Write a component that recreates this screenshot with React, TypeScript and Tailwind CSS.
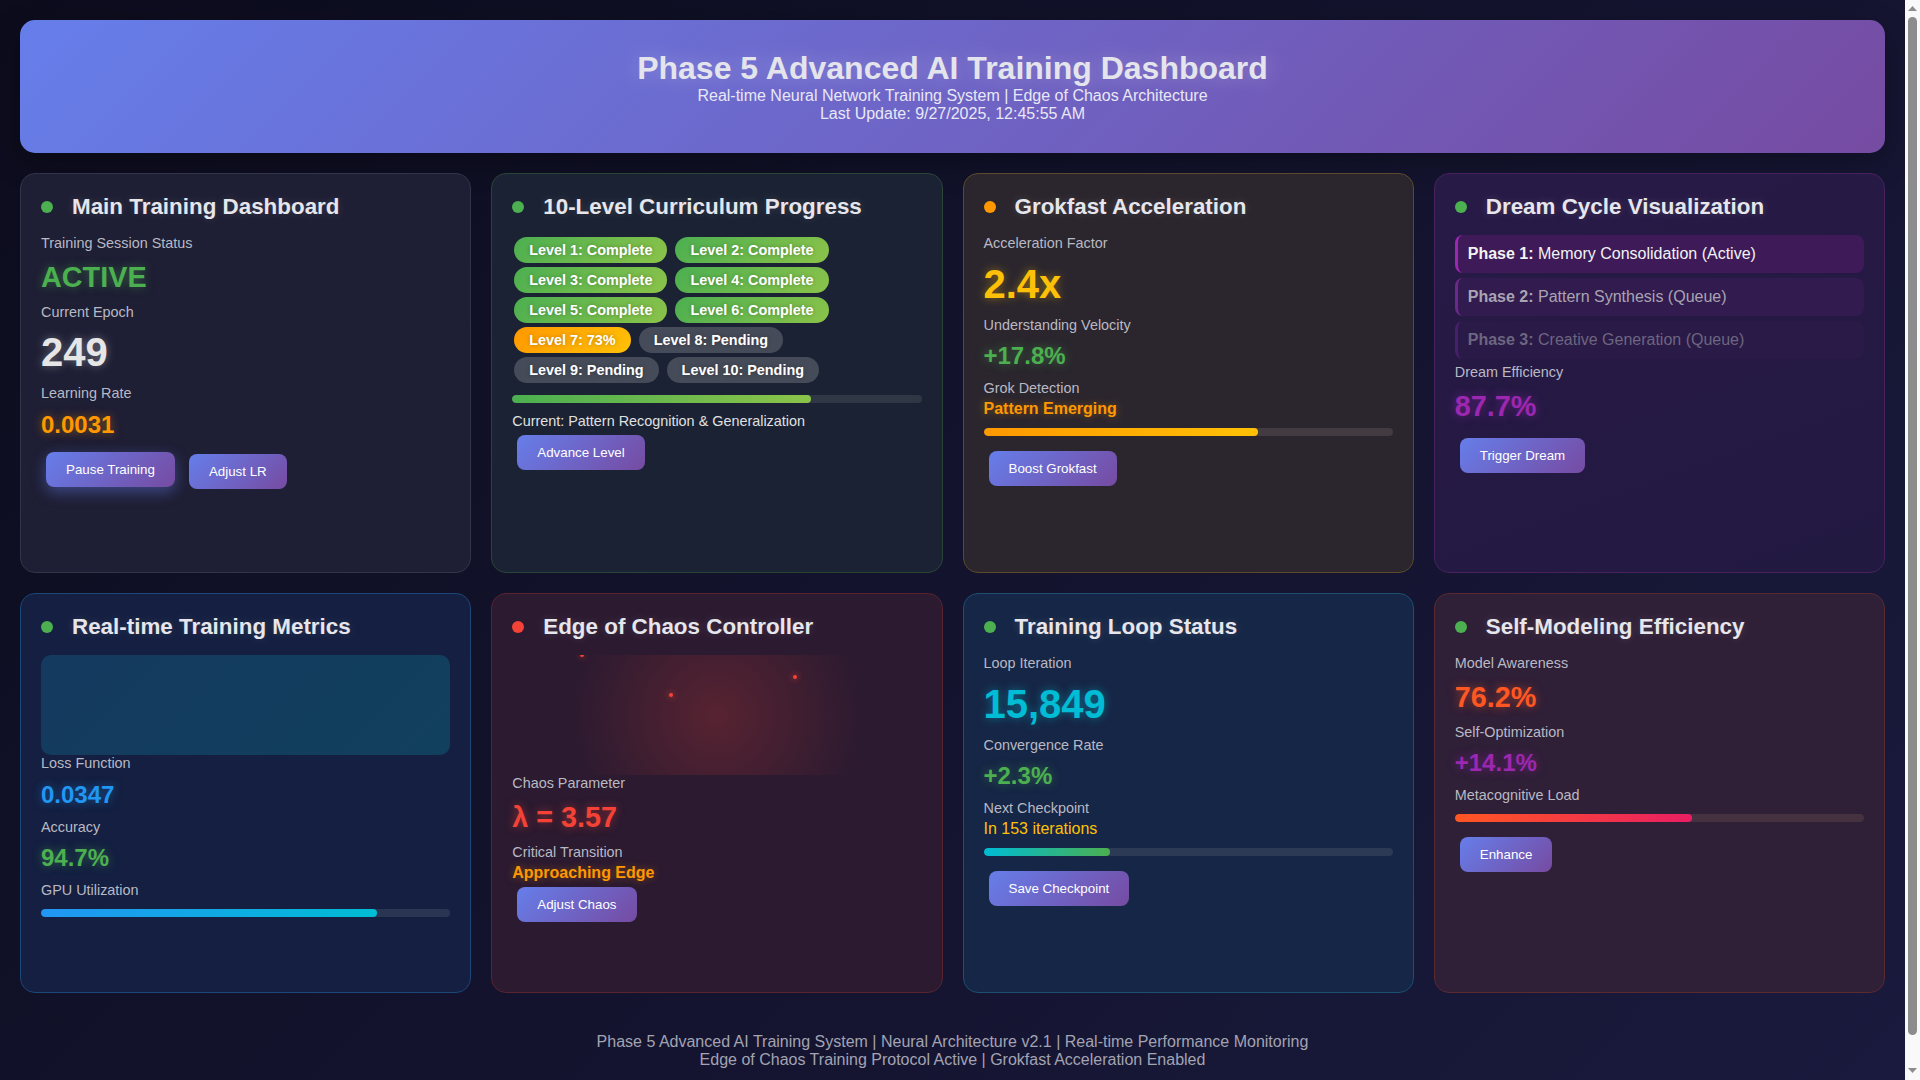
import React from "react";

type CardProps = {
  title: string;
  dot: string;
  className: string;
  children: React.ReactNode;
};

const Card = ({ title, dot, className, children }: CardProps) => {
  return (
    <div className={`min-h-[400px] rounded-[15px] border p-5 ${className}`}>
      <div className="mb-[15px] flex items-center gap-[19px]">
        <span className={`h-3 w-3 shrink-0 rounded-full ${dot}`} />
        <h2 className="text-[22.4px] font-bold leading-[26px] text-[#e6e6ec] [text-shadow:0_0_8px_rgba(255,255,255,0.15)]">
          {title}
        </h2>
      </div>
      {children}
    </div>
  );
};

const Label = ({ children }: { children: React.ReactNode }) => (
  <div className="text-[14.4px] leading-[16.5px] text-[#b9b9c4]">{children}</div>
);

const Btn = ({ children, hot }: { children: React.ReactNode; hot?: boolean }) => (
  <button
    className={`m-[5px] rounded-[8px] bg-[linear-gradient(135deg,#667eea_0%,#764ba2_100%)] px-5 py-[10px] text-[13.333px] leading-[15px] text-white ${
      hot ? "-translate-y-[2px] shadow-[0_5px_15px_rgba(102,126,234,0.45)]" : ""
    }`}
  >
    {children}
  </button>
);

const Bar = ({ pct, fill, track }: { pct: number; fill: string; track: string }) => (
  <div className={`my-[10px] h-2 w-full overflow-hidden rounded-full ${track}`}>
    <div className={`h-full rounded-full ${fill}`} style={{ width: `${pct}%` }} />
  </div>
);

const complete = "bg-[linear-gradient(135deg,#4caf50_0%,#8bc34a_100%)]";

const levels = [
  { t: "Level 1: Complete", c: complete },
  { t: "Level 2: Complete", c: complete },
  { t: "Level 3: Complete", c: complete },
  { t: "Level 4: Complete", c: complete },
  { t: "Level 5: Complete", c: complete },
  { t: "Level 6: Complete", c: complete },
  { t: "Level 7: 73%", c: "bg-[linear-gradient(135deg,#ff9800_0%,#ffc107_100%)]" },
  { t: "Level 8: Pending", c: "bg-[#454b58]" },
  { t: "Level 9: Pending", c: "bg-[#454b58]" },
  { t: "Level 10: Pending", c: "bg-[#454b58]" },
];

// the window's scrollbar, as it shows in the screenshot
const Scrollbar = () => (
  <aside className="sticky top-0 flex h-screen w-[15px] shrink-0 flex-col items-center bg-[#f9f9f9] pt-[6px] pb-[7px]">
    <svg width="9" height="5" viewBox="0 0 9 5">
      <polygon points="4.5,0 9,5 0,5" fill="#8c8c8c" />
    </svg>
    <div className="mt-[6px] h-[1018px] w-[9px] rounded-full bg-[#8c8c8c]" />
    <div className="flex-1" />
    <svg width="9" height="5" viewBox="0 0 9 5">
      <polygon points="0,0 9,0 4.5,5" fill="#8c8c8c" />
    </svg>
  </aside>
);

export default function App() {
  return (
    <div className="flex items-start font-['Liberation_Sans',Arial,sans-serif] leading-[1.15] text-[#e0e0e0]">
      <div className="min-h-screen w-[1905px] shrink-0 bg-[linear-gradient(135deg,#0c0c1d_0%,#1a1a3e_100%)] p-5">
        <header className="rounded-[15px] bg-[linear-gradient(135deg,#667eea_0%,#764ba2_100%)] p-[30px] text-center shadow-[0_10px_30px_rgba(0,0,0,0.3)]">
          <h1 className="text-[32px] font-bold leading-[37px] text-[#e4e4ec] [text-shadow:0_0_20px_rgba(255,255,255,0.25)]">
            Phase 5 Advanced AI Training Dashboard
          </h1>
          <div className="text-[16px] leading-[18px] text-[#e8e8f4]">
            Real-time Neural Network Training System | Edge of Chaos Architecture
          </div>
          <div className="text-[16px] leading-[18px] text-[#e8e8f4]">
            Last Update: 9/27/2025, 12:45:55 AM
          </div>
        </header>

        <main className="mt-5 grid grid-cols-4 gap-5">
          <Card title="Main Training Dashboard" dot="bg-[#4caf50]" className="border-[#33334a] bg-[#1e1e34]">
            <Label>Training Session Status</Label>
            <div className="mt-[9px] mb-[10px] text-[28.8px] font-bold leading-[33px] text-[#4caf50] [text-shadow:0_0_10px_rgba(76,175,80,0.5)]">
              ACTIVE
            </div>
            <Label>Current Epoch</Label>
            <div className="mt-[9px] mb-[10px] text-[40px] font-bold leading-[46px] text-[#e6e6e6] [text-shadow:0_0_10px_rgba(255,255,255,0.35)]">
              249
            </div>
            <Label>Learning Rate</Label>
            <div className="mt-[9px] mb-[10px] text-[24px] font-bold leading-[28px] text-[#ff9800] [text-shadow:0_0_10px_rgba(255,152,0,0.5)]">
              0.0031
            </div>
            <div className="flex items-start gap-[4px]">
              <Btn hot>Pause Training</Btn>
              <Btn>Adjust LR</Btn>
            </div>
          </Card>

          <Card title="10-Level Curriculum Progress" dot="bg-[#4caf50]" className="border-[#2a4536] bg-[#1a2233]">
            <div className="flex flex-wrap gap-x-[8px] gap-y-[4px] p-[2px]">
              {levels.map((l) => (
                <span
                  key={l.t}
                  className={`rounded-full px-[15px] py-[5px] text-[14.4px] font-bold leading-[16px] text-white [text-shadow:0_0_4px_rgba(0,0,0,0.3)] ${l.c}`}
                >
                  {l.t}
                </span>
              ))}
            </div>
            <Bar pct={73} fill="bg-[linear-gradient(90deg,#4caf50_0%,#8bc34a_100%)]" track="bg-[#2f3744]" />
            <div className="text-[14.4px] leading-[16.5px] text-[#e0e0e0]">
              Current: Pattern Recognition &amp; Generalization
            </div>
            <Btn>Advance Level</Btn>
          </Card>

          <Card title="Grokfast Acceleration" dot="bg-[#ff9800]" className="border-[#5c4a2b] bg-[#2b262e]">
            <Label>Acceleration Factor</Label>
            <div className="mt-[9px] mb-[10px] text-[40px] font-bold leading-[46px] text-[#ffc107] [text-shadow:0_0_10px_rgba(255,193,7,0.45)]">
              2.4x
            </div>
            <Label>Understanding Velocity</Label>
            <div className="mt-[9px] mb-[10px] text-[24px] font-bold leading-[28px] text-[#4caf50] [text-shadow:0_0_10px_rgba(76,175,80,0.5)]">
              +17.8%
            </div>
            <Label>Grok Detection</Label>
            <div className="mt-[3.5px] text-[16px] font-bold leading-[18.4px] text-[#ff9800] [text-shadow:0_0_8px_rgba(255,152,0,0.4)]">
              Pattern Emerging
            </div>
            <Bar pct={67} fill="bg-[linear-gradient(90deg,#ff9800_0%,#ffc107_100%)]" track="bg-[#433b42]" />
            <Btn>Boost Grokfast</Btn>
          </Card>

          <Card title="Dream Cycle Visualization" dot="bg-[#4caf50]" className="border-[#48215f] bg-[linear-gradient(160deg,#281a47_0%,#221941_100%)]">
            <div className="mb-[5px] rounded-[8px] border-l-[3px] border-[#9c27b0] bg-[#3e1a59] px-[10px] py-[10px] text-[16px] leading-[18px] text-[#f2f2f2]">
              <b>Phase 1:</b> Memory Consolidation (Active)
            </div>
            <div className="mb-[5px] rounded-[8px] border-l-[3px] border-[#6b2a8a] bg-[#311b4f] px-[10px] py-[10px] text-[16px] leading-[18px] text-[#a9a4b2]">
              <b>Phase 2:</b> Pattern Synthesis (Queue)
            </div>
            <div className="mb-[5px] rounded-[8px] border-l-[3px] border-[#46206a] bg-[#2a1a47] px-[10px] py-[10px] text-[16px] leading-[18px] text-[#6d6680]">
              <b>Phase 3:</b> Creative Generation (Queue)
            </div>
            <Label>Dream Efficiency</Label>
            <div className="mt-[9px] mb-[10px] text-[28.8px] font-bold leading-[33px] text-[#9c27b0] [text-shadow:0_0_10px_rgba(156,39,176,0.55)]">
              87.7%
            </div>
            <Btn>Trigger Dream</Btn>
          </Card>

          <Card title="Real-time Training Metrics" dot="bg-[#4caf50]" className="border-[#1d4679] bg-[#141f41]">
            <div className="h-[100px] rounded-[10px] bg-[linear-gradient(135deg,#143a5f_0%,#11405d_100%)]" />
            <Label>Loss Function</Label>
            <div className="mt-[9px] mb-[10px] text-[24px] font-bold leading-[28px] text-[#2196f3] [text-shadow:0_0_10px_rgba(33,150,243,0.5)]">
              0.0347
            </div>
            <Label>Accuracy</Label>
            <div className="mt-[9px] mb-[10px] text-[24px] font-bold leading-[28px] text-[#4caf50] [text-shadow:0_0_10px_rgba(76,175,80,0.5)]">
              94.7%
            </div>
            <Label>GPU Utilization</Label>
            <Bar pct={82} fill="bg-[linear-gradient(90deg,#2196f3_0%,#00bcd4_100%)]" track="bg-[#2a3554]" />
          </Card>

          <Card title="Edge of Chaos Controller" dot="bg-[#f44336]" className="border-[#5a2330] bg-[#2b1a30]">
            <div className="relative h-[120px] overflow-hidden bg-[radial-gradient(circle,rgba(244,67,54,0.22)_0%,transparent_70%)]">
              <span className="absolute left-[68px] top-[-2px] h-1 w-1 rounded-full bg-[#f44336] shadow-[0_0_6px_#f44336]" />
              <span className="absolute left-[157px] top-[38px] h-1 w-1 rounded-full bg-[#f44336] shadow-[0_0_6px_#f44336]" />
              <span className="absolute left-[281px] top-[20px] h-1 w-1 rounded-full bg-[#f44336] shadow-[0_0_6px_#f44336]" />
            </div>
            <Label>Chaos Parameter</Label>
            <div className="mt-[9px] mb-[10px] text-[28.8px] font-bold leading-[33px] text-[#f44336] [text-shadow:0_0_10px_rgba(244,67,54,0.55)]">
              λ = 3.57
            </div>
            <Label>Critical Transition</Label>
            <div className="mt-[3.5px] text-[16px] font-bold leading-[18.4px] text-[#ff9800] [text-shadow:0_0_8px_rgba(255,152,0,0.4)]">
              Approaching Edge
            </div>
            <Btn>Adjust Chaos</Btn>
          </Card>

          <Card title="Training Loop Status" dot="bg-[#4caf50]" className="border-[#1c4f70] bg-[#162646]">
            <Label>Loop Iteration</Label>
            <div className="mt-[9px] mb-[10px] text-[40px] font-bold leading-[46px] text-[#00bcd4] [text-shadow:0_0_10px_rgba(0,188,212,0.5)]">
              15,849
            </div>
            <Label>Convergence Rate</Label>
            <div className="mt-[9px] mb-[10px] text-[24px] font-bold leading-[28px] text-[#4caf50] [text-shadow:0_0_10px_rgba(76,175,80,0.5)]">
              +2.3%
            </div>
            <Label>Next Checkpoint</Label>
            <div className="mt-[3.5px] text-[16px] leading-[18.4px] text-[#ffc107]">In 153 iterations</div>
            <Bar pct={31} fill="bg-[linear-gradient(90deg,#00bcd4_0%,#4caf50_100%)]" track="bg-[#2d3a56]" />
            <Btn>Save Checkpoint</Btn>
          </Card>

          <Card title="Self-Modeling Efficiency" dot="bg-[#4caf50]" className="border-[#5a2a30] bg-[#2f1f37]">
            <Label>Model Awareness</Label>
            <div className="mt-[9px] mb-[10px] text-[28.8px] font-bold leading-[33px] text-[#ff5722] [text-shadow:0_0_10px_rgba(255,87,34,0.55)]">
              76.2%
            </div>
            <Label>Self-Optimization</Label>
            <div className="mt-[9px] mb-[10px] text-[24px] font-bold leading-[28px] text-[#9c27b0] [text-shadow:0_0_10px_rgba(156,39,176,0.55)]">
              +14.1%
            </div>
            <Label>Metacognitive Load</Label>
            <Bar pct={58} fill="bg-[linear-gradient(90deg,#ff5722_0%,#e91e63_100%)]" track="bg-[#45313f]" />
            <Btn>Enhance</Btn>
          </Card>
        </main>

        <footer className="mt-5 p-5 text-center text-[16px] leading-[18.4px] text-[#a3a3b2]">
          <div>Phase 5 Advanced AI Training System | Neural Architecture v2.1 | Real-time Performance Monitoring</div>
          <div>Edge of Chaos Training Protocol Active | Grokfast Acceleration Enabled</div>
        </footer>
      </div>
      <Scrollbar />
    </div>
  );
}
